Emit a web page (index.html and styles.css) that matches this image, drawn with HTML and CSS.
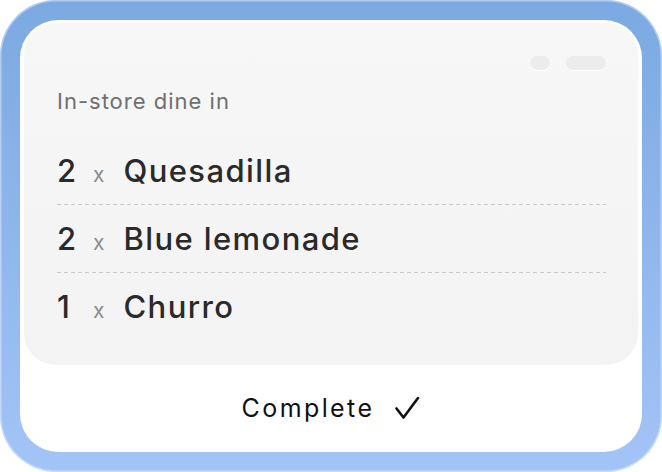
FILE: index.html
```html
<!DOCTYPE html>
<html lang="en">

<head>
    <meta charset="UTF-8">
    <meta
        name="viewport"
        content="width=device-width, initial-scale=1.0"
    >
    <title>Order ticket</title>
    <link rel="stylesheet" href="styles.css">
</head>

<body>
    <div class="ticket">
        <div class="ticket-panel">
            <section class="order">
                <div class="order-dots">
                    <span class="dot"></span>
                    <span class="dot dot-wide"></span>
                </div>
                <p class="order-label">In-store dine in</p>
                <ul class="order-items">
                    <li><span class="qty">2</span><span class="times">x</span>Quesadilla</li>
                    <li><span class="qty">2</span><span class="times">x</span>Blue lemonade</li>
                    <li><span class="qty">1</span><span class="times">x</span>Churro</li>
                </ul>
            </section>
            <footer class="ticket-status">
                <span>Complete</span>
                <svg class="check" width="26" height="24" viewBox="0 0 26 24">
                    <path d="M2.5 12.5 L9.5 21.5 L24 2" fill="none" stroke="#111" stroke-width="2.6" stroke-linecap="round" stroke-linejoin="round" />
                </svg>
            </footer>
        </div>
    </div>
</body>

</html>
```

FILE: styles.css
```css
body {
    margin: 0;
    font-family: Inter, "Noto Sans", sans-serif;
    background-color: white;
}

.ticket {
    width: 662px;
    height: 472px;
    box-sizing: border-box;
    padding: 20px;
    border-radius: 56px;
    /* Blue frame that gets lighter towards the bottom */
    background: linear-gradient(#7ba9e1, #a3c4f7);
    box-shadow: inset 0 0 0 1.5px rgba(255, 255, 255, 0.4);
}

.ticket-panel {
    display: flex;
    flex-direction: column;
    height: 100%;
    box-sizing: border-box;
    padding: 3px 4px 0;
    border-radius: 38px;
    background-color: white;
}

.order {
    height: 342px;
    box-sizing: border-box;
    padding: 33px 32px 0 33px;
    border-radius: 32px;
    background: linear-gradient(#f7f7f7, #f3f3f3);
}

.order-dots {
    display: flex;
    justify-content: flex-end;
    gap: 16px;
}

.dot {
    width: 20px;
    height: 14px;
    border-radius: 7px;
    background-color: #ececec;
    box-shadow: 0 1px 0 #fff;
}

.dot-wide {
    width: 40px;
}

.order-label {
    margin: 18px 0 22px;
    font-size: 22px;
    line-height: 26px;
    letter-spacing: 1px;
    color: #6f6f6f;
}

.order-items {
    margin: 0;
    padding: 0;
    list-style-type: none;
}

.order-items>li {
    padding: 16px 0 14px;
    font-size: 31px;
    line-height: 38px;
    font-weight: 500;
    letter-spacing: 1.4px;
    color: #2a2a2a;
}

/* Dashed divider between rows */
.order-items>li+li {
    background: repeating-linear-gradient(to right, #c9c9c9 0 4px, transparent 4px 7px) top / 100% 1px no-repeat;
}

/* Fixed width so the "x" lines up on every row */
.qty {
    display: inline-block;
    width: 18px;
    letter-spacing: 0;
}

.times {
    margin: 0 19px 0 18px;
    font-size: 21px;
    line-height: 1;
    font-weight: 400;
    letter-spacing: 0;
    color: #8c8c8c;
}

.ticket-status {
    display: flex;
    flex: 1;
    align-items: center;
    justify-content: center;
    gap: 20px;
    padding-bottom: 2px;
    font-size: 25px;
    letter-spacing: 2.4px;
    color: #111;
}
```
